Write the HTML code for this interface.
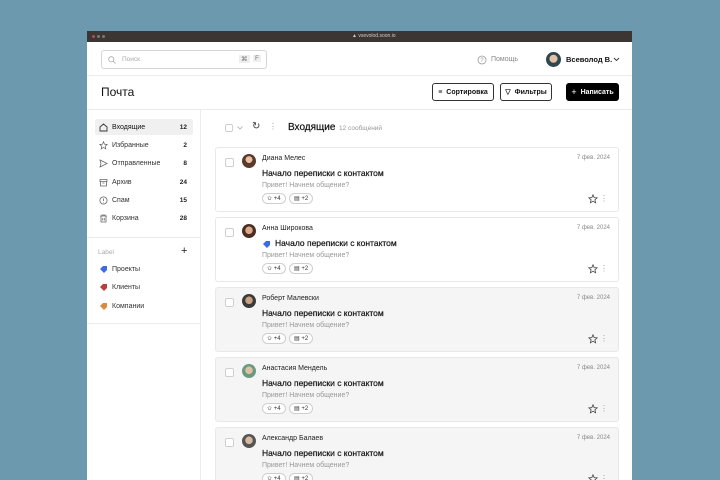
<!DOCTYPE html>
<html><head><meta charset="utf-8"><style>
*{box-sizing:border-box;margin:0;padding:0}
body{width:720px;height:480px;background:#6d99ae;font-family:"Liberation Sans",sans-serif;position:relative;overflow:hidden;color:#111}
.win{position:absolute;left:87px;top:31px;width:545px;height:449px;background:#fff;overflow:hidden}
.bar{position:absolute;left:0;top:0;width:545px;height:11px;background:#3b3634}
.abs{position:absolute}
.t{position:absolute;white-space:nowrap}
.hr{position:absolute;height:1px;background:#ececec}
.search{left:14px;top:19px;width:166px;height:19px;border:1px solid #d6d6d6;border-radius:3px}
.btn{position:absolute;top:52px;height:18px;border:1px solid #333;border-radius:3px;font-size:7px;font-weight:bold;display:flex;align-items:center;justify-content:center;gap:4px}
.side .it{position:absolute;left:8px;width:98px;height:16px;font-size:7px;color:#333;display:flex;align-items:center;padding-left:17px;border-radius:2px}
.side .it .n{position:absolute;right:6px;font-size:6.5px;font-weight:bold;color:#222}
.side .ic{position:absolute;left:4px;top:3.5px;width:9px;height:9px}
.card{position:absolute;left:128px;width:404px;height:65px;border:1px solid #e8e8e8;border-radius:3px;background:#fff}
.card.g{background:#f5f5f5}
.cb{position:absolute;left:9px;top:10px;width:9px;height:9px;border:1px solid #cfcfcf;border-radius:2px;background:#fff}
.av{position:absolute;left:26px;top:6px;width:14px;height:14px;border-radius:50%;background:radial-gradient(circle at 50% 40%,#e6c1a6 30%,#5a3a2a 32%)}
.nm{left:46px;top:7px;font-size:7px;color:#222}
.sb{left:46px;top:20px;font-size:8.5px;color:#111;-webkit-text-stroke:.2px #111}
.pv{left:46px;top:34px;font-size:7px;color:#999}
.chip{position:absolute;top:45px;height:11px;border:1px solid #cfcfcf;border-radius:6px;font-size:6px;color:#333;display:flex;align-items:center;gap:3px;padding:0 4px;background:#fff}
.dt{right:8px;top:7px;font-size:6px;color:#888}
.st{position:absolute;right:20px;top:46px;width:10px;height:10px}
.dots{position:absolute;right:10px;top:47px;font-size:8px;color:#999;line-height:8px}
</style></head><body>
<div class="win">
<div class="bar"><span class="abs" style="left:5px;top:4px;width:3px;height:3px;border-radius:50%;background:#b05050"></span><span class="abs" style="left:10px;top:4px;width:3px;height:3px;border-radius:50%;background:#777"></span><span class="abs" style="left:15px;top:4px;width:3px;height:3px;border-radius:50%;background:#777"></span><span class="t" style="left:265px;top:2px;font-size:5px;color:#ccc">▲ vsevolod.soon.io</span></div>
<div class="abs search"><svg class="abs" style="left:6px;top:5px" width="8" height="8" viewBox="0 0 8 8"><circle cx="3.3" cy="3.3" r="2.6" fill="none" stroke="#aaa" stroke-width=".8"/><path d="M5.3 5.3L7.5 7.5" stroke="#aaa" stroke-width=".8"/></svg><span class="t" style="left:20px;top:5px;font-size:6.5px;color:#aaa">Поиск</span><span class="t" style="left:137px;top:4px;font-size:6.5px;color:#777;background:#eee;padding:0 2px">⌘</span><span class="t" style="left:151px;top:4px;font-size:6.5px;color:#777;background:#eee;padding:0 2px">F</span></div>
<svg class="abs" style="left:390px;top:24px" width="10" height="10"><circle cx="5" cy="5" r="4" fill="none" stroke="#999" stroke-width=".8"/><text x="3.3" y="7" font-size="6" fill="#999" font-family="Liberation Sans">?</text></svg>
<span class="t" style="left:404px;top:25px;font-size:7px;color:#888">Помощь</span>
<div class="abs" style="left:459px;top:21px;width:15px;height:15px;border-radius:50%;background:radial-gradient(circle at 50% 45%,#e2c0a5 35%,#2f4650 37%)"></div>
<span class="t" style="left:479px;top:24px;font-size:7.5px;font-weight:bold">Всеволод В.</span>
<svg class="abs" style="left:526px;top:26px" width="7" height="5"><path d="M1 1L3.5 3.5 6 1" fill="none" stroke="#333" stroke-width=".9"/></svg>
<div class="hr" style="left:0;top:44px;width:545px"></div>
<span class="t" style="left:14px;top:54px;font-size:12px;font-weight:500">Почта</span>
<div class="btn" style="left:345px;width:62px"><span style="font-size:7px">≡</span>Сортировка</div>
<div class="btn" style="left:413px;width:52px"><span>▽</span>Фильтры</div>
<div class="btn" style="left:479px;width:53px;background:#000;color:#fff;border-color:#000"><span style="font-size:9px;font-weight:normal">+</span>Написать</div>
<div class="hr" style="left:0;top:78px;width:545px"></div>
<div class="abs" style="left:113px;top:78px;width:1px;height:371px;background:#ececec"></div>
<div class="side">
<div class="it" style="top:88px;background:#f0f0f0;color:#111"><svg class="ic" viewBox="0 0 9 9"><path d="M1 4L4.5 1 8 4V8H1Z" fill="none" stroke="#333" stroke-width=".9"/></svg>Входящие<span class="n">12</span></div>
<div class="it" style="top:106px"><svg class="ic" viewBox="0 0 10 10"><path d="M5 .8L6.2 3.6 9.2 3.8 6.9 5.8 7.6 8.8 5 7.2 2.4 8.8 3.1 5.8.8 3.8 3.8 3.6Z" fill="none" stroke="#666" stroke-width=".8"/></svg>Избранные<span class="n">2</span></div>
<div class="it" style="top:124px"><svg class="ic" viewBox="0 0 9 9"><path d="M1 1L8 4.5 1 8 2 4.5Z" fill="none" stroke="#666" stroke-width=".8"/></svg>Отправленные<span class="n">8</span></div>
<div class="it" style="top:143px"><svg class="ic" viewBox="0 0 9 9"><path d="M1 1.5H8V3.5H1ZM1.5 3.5V8H7.5V3.5M3.5 5H5.5" fill="none" stroke="#666" stroke-width=".8"/></svg>Архив<span class="n">24</span></div>
<div class="it" style="top:161px"><svg class="ic" viewBox="0 0 9 9"><circle cx="4.5" cy="4.5" r="3.6" fill="none" stroke="#666" stroke-width=".8"/><path d="M4.5 2.5V5M4.5 6V6.6" stroke="#666" stroke-width=".8"/></svg>Спам<span class="n">15</span></div>
<div class="it" style="top:179px"><svg class="ic" viewBox="0 0 9 9"><path d="M1 2H8M3 2V1H6V2M2 2V8H7V2M3.7 4V6.5M5.3 4V6.5" fill="none" stroke="#666" stroke-width=".8"/></svg>Корзина<span class="n">28</span></div>
<div class="hr" style="left:0;top:206px;width:113px"></div>
<span class="t" style="left:11px;top:218px;font-size:6.5px;color:#aaa">Label</span>
<span class="t" style="left:94px;top:214px;font-size:11px;color:#222">+</span>
<div class="it" style="top:230px"><svg class="ic" viewBox="0 0 9 9"><path d="M1 4L4 1H8V5L5 8Z" fill="#3e6be0"/></svg>Проекты</div>
<div class="it" style="top:248px"><svg class="ic" viewBox="0 0 9 9"><path d="M1 4L4 1H8V5L5 8Z" fill="#b83d3d"/></svg>Клиенты</div>
<div class="it" style="top:267px"><svg class="ic" viewBox="0 0 9 9"><path d="M1 4L4 1H8V5L5 8Z" fill="#d98a3d"/></svg>Компании</div>
<div class="hr" style="left:0;top:292px;width:113px"></div>
</div>
<div class="abs" style="left:138px;top:93px;width:8px;height:8px;border:1px solid #cfcfcf;border-radius:2px"></div>
<svg class="abs" style="left:150px;top:95px" width="6" height="4"><path d="M.5 .5L3 3 5.5 .5" fill="none" stroke="#aaa" stroke-width=".8"/></svg>
<span class="t" style="left:165px;top:90px;font-size:10px;color:#333">↻</span>
<span class="t" style="left:182px;top:91px;font-size:8px;color:#999">⋮</span>
<span class="t" style="left:201px;top:91px;font-size:10px;font-weight:500;-webkit-text-stroke:.2px #111">Входящие</span>
<span class="t" style="left:252px;top:94px;font-size:6.5px;color:#999">12 сообщений</span>

<div class="card" style="top:116px"><div class="cb"></div><div class="av"></div><span class="t nm">Диана Мелес</span><span class="t sb">Начало переписки с контактом</span><span class="t pv">Привет! Начнем общение?</span><div class="chip" style="left:46px">✩ +4</div><div class="chip" style="left:73px">▤ +2</div><span class="t dt">7 фев. 2024</span><svg class="st" viewBox="0 0 10 10"><path d="M5 .8L6.2 3.6 9.2 3.8 6.9 5.8 7.6 8.8 5 7.2 2.4 8.8 3.1 5.8.8 3.8 3.8 3.6Z" fill="none" stroke="#444" stroke-width=".8"/></svg><span class="dots">⋮</span></div>
<div class="card" style="top:186px"><div class="cb"></div><div class="av" style="background:radial-gradient(circle at 50% 45%,#d9a98a 35%,#4a2e22 37%)"></div><span class="t nm">Анна Широкова</span><svg class="abs" style="left:46px;top:22px" width="9" height="9" viewBox="0 0 9 9"><path d="M1 4L4 1H8V5L5 8Z" fill="#3e6be0"/></svg><span class="t sb" style="left:59px">Начало переписки с контактом</span><span class="t pv">Привет! Начнем общение?</span><div class="chip" style="left:46px">✩ +4</div><div class="chip" style="left:73px">▤ +2</div><span class="t dt">7 фев. 2024</span><svg class="st" viewBox="0 0 10 10"><path d="M5 .8L6.2 3.6 9.2 3.8 6.9 5.8 7.6 8.8 5 7.2 2.4 8.8 3.1 5.8.8 3.8 3.8 3.6Z" fill="none" stroke="#444" stroke-width=".8"/></svg><span class="dots">⋮</span></div>
<div class="card g" style="top:256px"><div class="cb"></div><div class="av" style="background:radial-gradient(circle at 50% 45%,#caa083 35%,#3a3a3a 37%)"></div><span class="t nm">Роберт Малевски</span><span class="t sb">Начало переписки с контактом</span><span class="t pv">Привет! Начнем общение?</span><div class="chip" style="left:46px">✩ +4</div><div class="chip" style="left:73px">▤ +2</div><span class="t dt">7 фев. 2024</span><svg class="st" viewBox="0 0 10 10"><path d="M5 .8L6.2 3.6 9.2 3.8 6.9 5.8 7.6 8.8 5 7.2 2.4 8.8 3.1 5.8.8 3.8 3.8 3.6Z" fill="none" stroke="#444" stroke-width=".8"/></svg><span class="dots">⋮</span></div>
<div class="card g" style="top:326px"><div class="cb"></div><div class="av" style="background:radial-gradient(circle at 50% 45%,#e0c0a5 35%,#6a9a80 37%)"></div><span class="t nm">Анастасия Мендель</span><span class="t sb">Начало переписки с контактом</span><span class="t pv">Привет! Начнем общение?</span><div class="chip" style="left:46px">✩ +4</div><div class="chip" style="left:73px">▤ +2</div><span class="t dt">7 фев. 2024</span><svg class="st" viewBox="0 0 10 10"><path d="M5 .8L6.2 3.6 9.2 3.8 6.9 5.8 7.6 8.8 5 7.2 2.4 8.8 3.1 5.8.8 3.8 3.8 3.6Z" fill="none" stroke="#444" stroke-width=".8"/></svg><span class="dots">⋮</span></div>
<div class="card g" style="top:396px"><div class="cb"></div><div class="av" style="background:radial-gradient(circle at 50% 45%,#d8b8a0 35%,#555 37%)"></div><span class="t nm">Александр Балаев</span><span class="t sb">Начало переписки с контактом</span><span class="t pv">Привет! Начнем общение?</span><div class="chip" style="left:46px">✩ +4</div><div class="chip" style="left:73px">▤ +2</div><span class="t dt">7 фев. 2024</span><svg class="st" viewBox="0 0 10 10"><path d="M5 .8L6.2 3.6 9.2 3.8 6.9 5.8 7.6 8.8 5 7.2 2.4 8.8 3.1 5.8.8 3.8 3.8 3.6Z" fill="none" stroke="#444" stroke-width=".8"/></svg><span class="dots">⋮</span></div>
</div>
</body></html>
